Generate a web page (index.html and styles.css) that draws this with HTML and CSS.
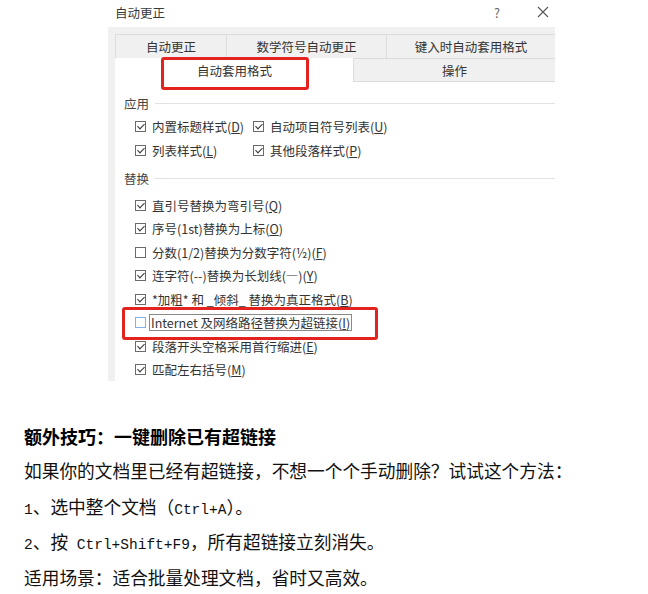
FILE: index.html
```html
<!DOCTYPE html>
<html lang="zh-CN">
<head>
<meta charset="utf-8">
<title>自动更正</title>
<link rel="stylesheet" href="styles.css">
</head>
<body>
<div class="shot">
  <div class="titlebar">
    <span class="title">自动更正</span>
    <span class="help">?</span>
    <svg class="close" width="12" height="12" viewBox="0 0 12 12"><path d="M1 1 L11 11 M11 1 L1 11" stroke="#555" stroke-width="1.1" fill="none"/></svg>
  </div>
  <div class="tabs">
    <div class="tabrow">
      <div class="tab t1">自动更正</div>
      <div class="tab t2">数学符号自动更正</div>
      <div class="tab t3">键入时自动套用格式</div>
    </div>
    <div class="tabrow">
      <div class="tab active">自动套用格式</div>
      <div class="tab t5">操作</div>
    </div>
  </div>
  <div class="panel">
    <div class="group"><span>应用</span><i class="rule"></i></div>
    <div class="grid2">
      <div class="row"><span class="cb on"></span>内置标题样式(<u>D</u>)</div>
      <div class="row"><span class="cb on"></span>自动项目符号列表(<u>U</u>)</div>
      <div class="row"><span class="cb on"></span>列表样式(<u>L</u>)</div>
      <div class="row"><span class="cb on"></span>其他段落样式(<u>P</u>)</div>
    </div>
    <div class="group g2"><span>替换</span><i class="rule"></i></div>
    <div class="list">
      <div class="row r"><span class="cb on"></span>直引号替换为弯引号(<u>Q</u>)</div>
      <div class="row r"><span class="cb on"></span>序号(1st)替换为上标(<u>O</u>)</div>
      <div class="row r"><span class="cb"></span>分数(1/2)替换为分数字符(½)(<u>F</u>)</div>
      <div class="row r"><span class="cb on"></span>连字符(--)替换为长划线(—)(<u>Y</u>)</div>
      <div class="row r"><span class="cb on"></span>*加粗* 和 _倾斜_ 替换为真正格式(<u>B</u>)</div>
      <div class="row r"><span class="cb hover"></span><span class="focus">Internet 及网络路径替换为超链接(<u>I</u>)</span></div>
      <div class="row r"><span class="cb on"></span>段落开头空格采用首行缩进(<u>E</u>)</div>
      <div class="row r"><span class="cb on"></span>匹配左右括号(<u>M</u>)</div>
    </div>
  </div>
  <div class="mark m1"></div>
  <div class="mark m2"></div>
</div>

<div class="article">
  <h3>额外技巧：一键删除已有超链接</h3>
  <p>如果你的文档里已经有超链接，不想一个个手动删除？试试这个方法：</p>
  <p><span class="lat">1</span>、选中整个文档（<span class="lat">Ctrl+A</span>）。</p>
  <p><span class="lat">2</span>、按<span class="lat"> Ctrl+Shift+F9</span>，所有超链接立刻消失。</p>
  <p>适用场景：适合批量处理文档，省时又高效。</p>
</div>
</body>
</html>
```

FILE: styles.css
```css
html, body {
  margin: 0;
  padding: 0;
  background: #ffffff;
}

body {
  font-family: "Noto Sans CJK SC", "Noto Sans", sans-serif;
}

.shot {
  position: relative;
  margin-left: 108px;
  width: 447px;
  height: 381px;
  background: #f0f0f0;
  overflow: hidden;
  font-size: 12.5px;
  color: #333;
}

.titlebar {
  box-sizing: border-box;
  height: 27px;
  padding-bottom: 3px;
  background: #ffffff;
  display: flex;
  align-items: center;
  padding-left: 7px;
}

.title {
  color: #3a3a3a;
  flex: 1;
}

.help {
  width: 12px;
  text-align: center;
  margin-right: 34px;
  color: #666;
}

.close {
  margin-right: 6px;
}

.tabs {
  margin-top: 7px;
  margin-left: 7px;
}

.tabrow {
  display: flex;
  height: 24px;
}

.tab {
  box-sizing: border-box;
  height: 24px;
  line-height: 23px;
  text-align: center;
  background: #f0f0f0;
  border-top: 1px solid #dcdcdc;
  border-left: 1px solid #dcdcdc;
  color: #333;
}

.t1 { width: 111px; }
.t2 { width: 160px; }
.t3 { flex: 1; }
.active {
  width: 238px;
  background: #ffffff;
  border-color: #ffffff;
}
.t5 { flex: 1; border-bottom: 1px solid #dcdcdc; }

.panel {
  margin-left: 7px;
  background: #ffffff;
  height: 299px;
  padding-top: 12px;
  box-sizing: border-box;
}

.group {
  display: flex;
  align-items: center;
  height: 18px;
  padding-left: 9px;
  color: #444;
}

.group.g2 {
  margin-top: 7px;
  margin-bottom: 6.5px;
}

.rule {
  flex: 1;
  margin-left: 6px;
  border-top: 1px solid #e3e3e3;
}

.grid2 {
  display: grid;
  grid-template-columns: 118px auto;
  padding-left: 20px;
  margin-top: 2px;
}

.list {
  padding-left: 20px;
}

.row {
  height: 24px;
  display: flex;
  align-items: center;
  white-space: nowrap;
}

.row.r {
  height: 23.5px;
}

u {
  text-decoration: underline;
  text-underline-offset: 1px;
}

.cb {
  position: relative;
  box-sizing: border-box;
  width: 11px;
  height: 11px;
  border: 1px solid #6a6a6a;
  margin-right: 6px;
  flex: none;
  background: #fff;
}

.cb.on::after {
  content: "";
  position: absolute;
  left: 3px;
  top: 0px;
  width: 3px;
  height: 6px;
  border: solid #333;
  border-width: 0 1.3px 1.3px 0;
  transform: rotate(45deg);
}

.cb.hover {
  border-color: #7fb2e8;
}

.focus {
  border: 1px solid #8a8a8a;
  padding: 0 1px;
  line-height: 15px;
  margin-left: -3px;
}

.mark {
  position: absolute;
  border: 3px solid #e3231f;
  border-radius: 3px;
  box-sizing: border-box;
}

.m1 {
  left: 53px;
  top: 57px;
  width: 148px;
  height: 33px;
}

.m2 {
  left: 14px;
  top: 307px;
  width: 256px;
  height: 33px;
}

.article {
  padding-left: 24px;
  padding-top: 38px;
  font-size: 17.7px;
  color: #111;
}

.article h3 {
  margin: 0;
  font-size: 18px;
  font-weight: bold;
  line-height: 34px;
  color: #000;
}

.article p {
  margin: 0;
  line-height: 35.5px;
}

.lat {
  font-family: "Liberation Mono", monospace;
  font-size: 14.5px;
  line-height: 1;
}
```
